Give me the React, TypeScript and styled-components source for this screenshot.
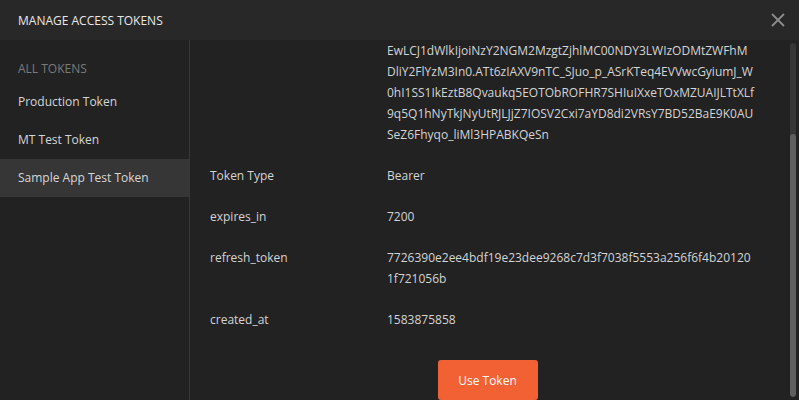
import React, { useLayoutEffect, useRef, useState } from 'react'
import styled, { createGlobalStyle } from 'styled-components'

const GlobalStyle = createGlobalStyle`
  html, body {
    margin: 0;
    padding: 0;
    background: #222222;
  }
  body {
    font-family: 'Open Sans', 'Liberation Sans', sans-serif;
    font-size: 12px;
    color: #d4d4d4;
  }
`

const Modal = styled.div`
  width: 799px;
  height: 400px;
  display: flex;
  flex-direction: column;
  background: #222222;
  overflow: hidden;
`

const Header = styled.div`
  height: 40px;
  flex: 0 0 40px;
  display: flex;
  align-items: center;
  justify-content: space-between;
  padding: 0 12px 0 18px;
  background: #282828;
`

const Title = styled.h1`
  margin: 0;
  font-size: 12px;
  font-weight: 400;
  color: #e8e8e8;
  text-transform: uppercase;
`

const CloseButton = styled.button`
  width: 18px;
  height: 18px;
  padding: 0;
  border: 0;
  background: transparent;
  display: flex;
  align-items: center;
  justify-content: center;
  cursor: pointer;
`

const Body = styled.div`
  flex: 1;
  display: flex;
  min-height: 0;
`

const Sidebar = styled.nav`
  width: 189px;
  flex: 0 0 189px;
  border-right: 1px solid #383838;
  padding-top: 20px;
`

const SectionLabel = styled.div`
  padding: 0 18px;
  line-height: 18px;
  margin-bottom: 5px;
  color: #7a7a7a;
  text-transform: uppercase;
`

const TokenItem = styled.div<{ $active?: boolean }>`
  height: 38px;
  line-height: 38px;
  padding: 0 18px;
  color: #d6d6d6;
  background: ${p => (p.$active ? '#363636' : 'transparent')};
  cursor: pointer;
`

const Pane = styled.div`
  flex: 1;
  overflow-y: auto;
  padding: 10px 25px 0 20px;
  scrollbar-width: none;

  &::-webkit-scrollbar {
    display: none;
  }
`

const ScrollTrack = styled.div`
  width: 6px;
  flex: 0 0 6px;
  margin: 3px 3px 3px 0;
  border-radius: 3px;
  background: #363636;
  display: flex;
  flex-direction: column;
  justify-content: flex-end;
  overflow: hidden;
`

const ScrollThumb = styled.div`
  border-radius: 3px;
  background: #5f5f5f;
`

const Row = styled.div`
  display: flex;
  padding: 10px 0;
  line-height: 21px;
`

const Key = styled.div`
  width: 177px;
  flex: 0 0 177px;
  color: #d4d4d4;
`

const Value = styled.div`
  flex: 1;
  color: #d4d4d4;
  white-space: nowrap;
`

const Actions = styled.div`
  display: flex;
  justify-content: center;
  margin-top: 20px;
`

const UseButton = styled.button`
  width: 100px;
  height: 40px;
  border: 0;
  border-radius: 3px;
  background: #f26134;
  color: #ffffff;
  font-family: 'Open Sans', 'Liberation Sans', sans-serif;
  font-size: 12px;
  cursor: pointer;
`

const tokens = ['Production Token', 'MT Test Token', 'Sample App Test Token']

const accessToken = [
  'eyJ0eXAiOiJKV1QiLCJhbGciOiJSUzI1NiIsImtpZCI6Ik5EY3hRVE',
  'EzTVRSR1FqTXdNRVJHTmtNMU56TXpRa0pGTjBZM05UQXhOVFF6UTBV',
  'NU1qUkdNdyJ9.eyJpc3MiOiJodHRwczovL2F1dGguZXhhbXBsZS5jb20',
  'vIiwic3ViIjoiYXV0aDB8NWU2NzhhMWYyYjNjNGQ1ZTZmN2E4YjljIiw',
  'iYXVkIjoiaHR0cHM6Ly9hcGkuZXhhbXBsZS5jb20iLCJpYXQiOjE1OD',
  'EwLCJ1dWlkIjoiNzY2NGM2MzgtZjhlMC00NDY3LWIzODMtZWFhM',
  'DliY2FlYzM3In0.ATt6zIAXV9nTC_SJuo_p_ASrKTeq4EVVwcGyiumJ_W',
  '0hI1SS1IkEztB8Qvaukq5EOTObROFHR7SHIuIXxeTOxMZUAIJLTtXLf',
  '9q5Q1hNyTkjNyUtRJLJjZ7IOSV2Cxi7aYD8di2VRsY7BD52BaE9K0AU',
  'SeZ6Fhyqo_liMl3HPABKQeSn',
]

const fields: [string, string[]][] = [
  ['access_token', accessToken],
  ['Token Type', ['Bearer']],
  ['expires_in', ['7200']],
  ['refresh_token', ['7726390e2ee4bdf19e23dee9268c7d3f7038f5553a256f6f4b20120', '1f721056b']],
  ['created_at', ['1583875858']],
]

const CloseIcon = () => (
  <svg width="14" height="14" viewBox="0 0 14 14">
    <path d="M1.5 1.5 L12.5 12.5 M12.5 1.5 L1.5 12.5" stroke="#8c8c8c" strokeWidth="1.8" strokeLinecap="round" />
  </svg>
)

export default function App() {
  const paneRef = useRef<HTMLDivElement>(null)
  const [thumb, setThumb] = useState(1)

  useLayoutEffect(() => {
    const el = paneRef.current
    if (!el) return
    el.scrollTop = el.scrollHeight
    setThumb(el.clientHeight / el.scrollHeight)
  }, [])

  return (
    <>
      <GlobalStyle />
      <Modal>
        <Header>
          <Title>Manage Access Tokens</Title>
          <CloseButton aria-label="Close">
            <CloseIcon />
          </CloseButton>
        </Header>
        <Body>
          <Sidebar>
            <SectionLabel>All Tokens</SectionLabel>
            {tokens.map(t => (
              <TokenItem key={t} $active={t === 'Sample App Test Token'}>
                {t}
              </TokenItem>
            ))}
          </Sidebar>
          <Pane ref={paneRef}>
            {fields.map(([k, lines]) => (
              <Row key={k}>
                <Key>{k}</Key>
                <Value>
                  {lines.map((l, i) => (
                    <div key={i}>{l}</div>
                  ))}
                </Value>
              </Row>
            ))}
            <Actions>
              <UseButton>Use Token</UseButton>
            </Actions>
          </Pane>
          <ScrollTrack>
            <ScrollThumb style={{ height: `${thumb * 100}%` }} />
          </ScrollTrack>
        </Body>
      </Modal>
    </>
  )
}
